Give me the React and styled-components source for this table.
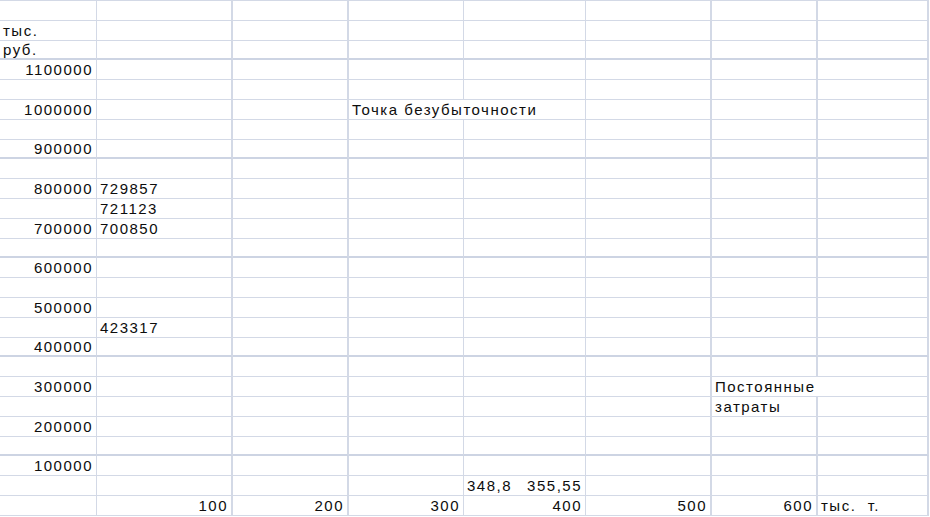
import React from "react";
import styled, { createGlobalStyle } from "styled-components";

const GlobalStyle = createGlobalStyle`
  html, body {
    margin: 0;
    padding: 0;
    background: #ffffff;
  }
  body {
    font-family: "Liberation Sans", Arial, sans-serif;
    color: #0d0d0d;
  }
`;

// column widths include the right border
const columns = [
  { width: 97, line: 1 },
  { width: 136, line: 2 },
  { width: 116, line: 2 },
  { width: 115, line: 1 },
  { width: 122, line: 1 },
  { width: 126, line: 2 },
  { width: 106, line: 2 },
  { width: 111, line: 2 },
];

const ROWS = 26;
const thickRows = [2, 7, 12, 17, 22];

// sparse content: row -> list of cells
const content = {
  1: [{ col: 0, text: "тыс.", align: "left" }],
  2: [{ col: 0, text: "руб.", align: "left" }],
  3: [{ col: 0, text: "1100000" }],
  5: [
    { col: 0, text: "1000000" },
    { col: 3, text: "Точка безубыточности", align: "left", span: 2 },
  ],
  7: [{ col: 0, text: "900000" }],
  9: [
    { col: 0, text: "800000" },
    { col: 1, text: "729857", align: "left" },
  ],
  10: [{ col: 1, text: "721123", align: "left" }],
  11: [
    { col: 0, text: "700000" },
    { col: 1, text: "700850", align: "left" },
  ],
  13: [{ col: 0, text: "600000" }],
  15: [{ col: 0, text: "500000" }],
  16: [{ col: 1, text: "423317", align: "left" }],
  17: [{ col: 0, text: "400000" }],
  19: [
    { col: 0, text: "300000" },
    { col: 6, text: "Постоянные", align: "left", span: 2 },
  ],
  20: [{ col: 6, text: "затраты", align: "left" }],
  21: [{ col: 0, text: "200000" }],
  23: [{ col: 0, text: "100000" }],
  24: [{ col: 4, text: ["348,8", "355,55"], align: "split" }],
  25: [
    { col: 1, text: "100" },
    { col: 2, text: "200" },
    { col: 3, text: "300" },
    { col: 4, text: "400" },
    { col: 5, text: "500" },
    { col: 6, text: "600" },
    { col: 7, text: "тыс.\u00a0 т.", align: "left" },
  ],
};

const Sheet = styled.div`
  display: grid;
  grid-template-columns: ${columns.map((c) => `${c.width}px`).join(" ")};
  grid-auto-rows: 19.8px;
  width: 929px;
  border-top: 1px solid #d3d9e6;
`;

const Cell = styled.div`
  box-sizing: border-box;
  display: flex;
  align-items: center;
  justify-content: ${({ $align }) =>
    $align === "left" ? "flex-start" : $align === "split" ? "space-between" : "flex-end"};
  grid-column: span ${({ $span }) => $span};
  padding: 0 3px;
  border-right: ${({ $line }) => $line}px solid #d3d9e6;
  border-bottom: ${({ $thick }) => ($thick ? 2 : 1)}px solid
    ${({ $thick }) => ($thick ? "#cdd4e3" : "#d3d9e6")};
  font-size: 15px;
  letter-spacing: 1.5px;
  white-space: nowrap;
  overflow: visible;
`;

function buildRow(r) {
  const items = content[r] || [];
  const cells = [];
  let c = 0;
  while (c < columns.length) {
    const item = items.find((i) => i.col === c);
    const span = item && item.span ? item.span : 1;
    const last = columns[c + span - 1];
    cells.push(
      <Cell
        key={`${r}-${c}`}
        $span={span}
        $line={last.line}
        $thick={thickRows.includes(r)}
        $align={item ? item.align : "right"}
      >
        {item && Array.isArray(item.text)
          ? item.text.map((t) => <span key={t}>{t}</span>)
          : item
          ? item.text
          : null}
      </Cell>
    );
    c += span;
  }
  return cells;
}

export default function App() {
  return (
    <>
      <GlobalStyle />
      <Sheet>{Array.from({ length: ROWS }, (_, r) => buildRow(r))}</Sheet>
    </>
  );
}
